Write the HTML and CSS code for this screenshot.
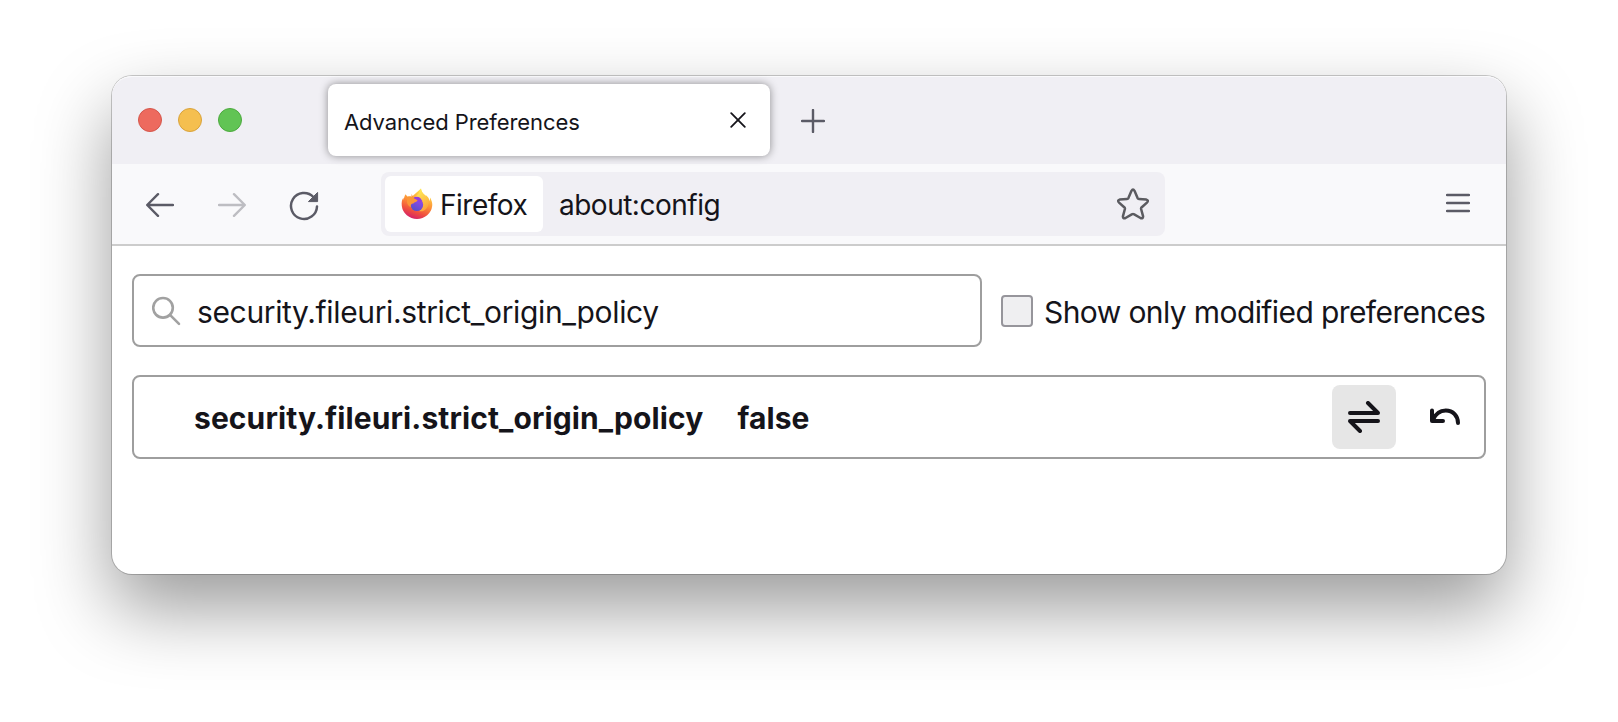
FILE: index.html
```html
<!DOCTYPE html>
<html lang="en">
<head>
<meta charset="utf-8">
<title>Advanced Preferences</title>
<link rel="stylesheet" href="styles.css">
</head>
<body>
<div class="window">
  <div class="tabbar">
    <div class="lights"><span class="light red"></span><span class="light yellow"></span><span class="light green"></span></div>
    <div class="tab">
      <span class="tab-title">Advanced Preferences</span>
      <svg class="close" width="16" height="16" viewBox="0 0 16 16"><path d="M1.2 1.2 14.8 14.8M14.8 1.2 1.2 14.8"/></svg>
    </div>
    <svg class="plus" width="24" height="24" viewBox="0 0 24 24"><path d="M12 1V23M1 12H23"/></svg>
  </div>
  <div class="nav">
    <svg class="back" width="28" height="24" viewBox="0 0 28 24"><path d="M27 12H1.5M12 1.2 1.2 12 12 22.8"/></svg>
    <svg class="forward" width="28" height="24" viewBox="0 0 28 24"><path d="M1 12H26.5M16 1.2 26.8 12 16 22.8"/></svg>
    <svg class="reload" width="30" height="30" viewBox="0 0 30 30"><path class="arc" d="M28 15.5A13 13 0 1 1 24.4 6"/><path class="tip" d="M28.6 1.8V10.6H19.8Z"/></svg>
    <div class="urlbar">
      <div class="identity">
        <svg class="logo" width="32" height="32" viewBox="0 0 32 32">
          <defs>
            <linearGradient id="flame" x1=".75" y1=".1" x2=".4" y2="1"><stop offset="0" stop-color="#ffe24a"/><stop offset=".45" stop-color="#fd9038"/><stop offset=".75" stop-color="#f0503f"/><stop offset="1" stop-color="#d62368"/></linearGradient>
            <linearGradient id="globe" x1=".8" y1="0" x2=".3" y2="1"><stop offset="0" stop-color="#9a48ee"/><stop offset="1" stop-color="#5450c8"/></linearGradient>
            <linearGradient id="wing" x1=".2" y1="0" x2=".6" y2="1"><stop offset="0" stop-color="#fff15a"/><stop offset="1" stop-color="#fda23c"/></linearGradient>
          </defs>
          <path fill="url(#flame)" d="M4.6 6.2C5 7.3 5.5 8 6.3 8.8 8 8.2 9.4 8.2 10.8 8.7L20 .5C20.5 4.5 22.5 5.8 25 8V7.2C27.5 9 28.2 11 28.6 13.2L29.2 9.5C30.8 13 31.6 15 31.2 18A15.3 14.6 0 0 1 .8 18C.4 14 1 11.5 2.4 9.7L2.6 12C3 9.8 3.5 8 4.6 6.2Z"/>
          <path fill="url(#wing)" d="M20 .5C20.5 4.5 22.5 5.8 25 8 28.5 11.5 28.5 16 26.2 19.5 24 23 20 24 18 23 22 21 23.2 16 20.5 12.5 18.5 10.2 15 10.5 14.5 8.6 16.6 7 18.7 4.5 20 .5Z"/>
          <circle cx="15.9" cy="16.8" r="6.3" fill="url(#globe)"/>
          <path fill="#943edd" d="M12 10.2C15.5 7.4 20.5 9 21.2 14.2L19.8 12.8 19.6 15Z"/>
          <path fill="#fb9638" d="M4.6 6.2C5.2 7.6 6 8.2 7 9 8.5 8.6 9.5 8.6 10.4 9.2L10.6 6 12.8 10.2 16.6 12.2C16.2 14 13.4 14 12.4 15.4 10.4 15.2 9.4 17 9.8 19.2 7 17.8 5.4 15.4 6 12Z"/>
        </svg>
        <span class="id-text">Firefox</span>
      </div>
      <span class="url">about:config</span>
      <svg class="star" width="32" height="32" viewBox="0 0 32 32"><path d="M14.5 2.8Q16 .2 17.5 2.8L20.6 10.1Q21 10.9 22 11L29.4 11.6Q31.8 12.3 30.2 14.3L24.5 19.5Q23.9 20.1 24.1 21L26.1 28.4Q26 31.1 23.5 30L16.8 26.2Q16 25.7 15.2 26.2L8.5 30Q6 31.1 5.9 28.4L7.9 21Q8.1 20.1 7.5 19.5L1.8 14.3Q.2 12.3 2.6 11.6L10 11Q11 10.9 11.4 10.1Z"/></svg>
    </div>
    <svg class="menu" width="24" height="20" viewBox="0 0 24 20"><path d="M1 2H23M1 10H23M1 18H23"/></svg>
  </div>
  <div class="content">
    <div class="search-row">
      <div class="search">
        <svg class="lens" width="30" height="30" viewBox="0 0 30 30"><circle cx="11" cy="11.8" r="9.8"/><path d="M18 18.8 27 27.8"/></svg>
        <span class="query">security.fileuri.strict_origin_policy</span>
      </div>
      <span class="checkbox"></span>
      <span class="label">Show only modified preferences</span>
    </div>
    <div class="pref">
      <span class="pref-name">security.fileuri.strict_origin_policy</span>
      <span class="pref-value">false</span>
      <span class="toggle"><svg width="32" height="32" viewBox="0 0 32 32"><path d="M2 12H30L20 2M30 20H2L12 30"/></svg></span>
      <svg class="undo" width="32" height="20" viewBox="0 0 32 20"><path d="M3 3.4V14H14M3.4 13.6C6.5 6.5 11.5 3.6 16.8 3.6 24 3.6 29 9 29 16"/></svg>
    </div>
  </div>
</div>
</body>
</html>
```
FILE: styles.css
```css
* { box-sizing: border-box; }
body { margin: 0; height: 722px; overflow: hidden; background: #fff; padding: 76px 112px; font-family: Inter, "Liberation Sans", sans-serif; color: #15141a; white-space: nowrap; }
svg { display: block; flex: none; fill: none; stroke-linecap: round; stroke-linejoin: round; }
.window { width: 1394px; height: 498px; border-radius: 20px; background: #fff; box-shadow: 0 0 0 1px rgba(0,0,0,.2), 0 34px 74px rgba(0,0,0,.4); }
.tabbar { height: 88px; display: flex; align-items: flex-start; background: #f0eff4; border-radius: 20px 20px 0 0; box-shadow: inset 0 2px 0 -1px #fafafc; padding: 8px 0 0 26px; }
.lights { display: flex; gap: 16px; margin-top: 24px; width: 190px; }
.light { width: 24px; height: 24px; border-radius: 50%; border: 1px solid; }
.red { background: #ed6a5e; border-color: #d5564b; }
.yellow { background: #f5bf4f; border-color: #d9a33c; }
.green { background: #61c454; border-color: #4caa3e; }
.tab { width: 442px; height: 72px; display: flex; align-items: center; background: #fff; border-radius: 8px; padding: 0 24px 0 16px; box-shadow: 0 0 8px rgba(0,0,0,.42); }
.tab-title { font-size: 22px; letter-spacing: -.08px; padding-top: 4px; }
.close { margin-left: auto; stroke: #15141a; stroke-width: 1.8; }
.plus { margin: 25px 0 0 31px; stroke: #5b5b66; stroke-width: 2.4; }
.nav { height: 82px; display: flex; align-items: center; background: #f9f9fb; border-bottom: 2px solid #ccc; padding: 0 36px 0 34px; }
.back { stroke: #5b5b66; stroke-width: 2.4; margin-top: 2px; }
.forward { stroke: #bdbdc2; stroke-width: 2.4; margin: 2px 0 0 44px; }
.reload { margin: 3px 0 0 43px; }
.arc { stroke: #5b5b66; stroke-width: 2.5; }
.tip { fill: #5b5b66; stroke: #5b5b66; stroke-width: 1; }
.urlbar { width: 784px; height: 64px; margin-left: 62px; display: flex; align-items: center; background: #f0eff4; border-radius: 8px; padding: 4px 16px 4px 4px; font-size: 28px; letter-spacing: -.5px; }
.identity { width: 158px; height: 56px; display: flex; align-items: center; background: #fff; border-radius: 6px; padding-left: 16px; }
.id-text { margin-left: 7px; padding-top: 2px; }
.url { margin-left: 16px; padding-top: 2px; }
.star { margin-left: auto; stroke: #5b5b60; stroke-width: 2.5; }
.menu { margin: 0 0 2px auto; stroke: #5b5b66; stroke-width: 2.3; }
.content { padding: 28px 20px 0; }
.search-row { height: 73px; display: flex; align-items: center; }
.search { flex: none; width: 850px; height: 73px; display: flex; align-items: center; border: 2px solid #9e9e9e; border-radius: 8px; padding-left: 18px; }
.lens { stroke: #a1a1a1; stroke-width: 2.6; }
.query, .label { font-size: 30px; padding-top: 2px; }
.query { margin-left: 15px; letter-spacing: -.36px; }
.checkbox { flex: none; width: 32px; height: 32px; margin-left: 19px; background: #efeff1; border: 2px solid #96959b; border-radius: 4px; }
.label { margin-left: 11px; letter-spacing: -.6px; }
.pref { height: 84px; margin-top: 28px; display: flex; align-items: center; border: 2px solid #9e9e9e; border-radius: 8px; padding: 0 23px 0 60px; font-size: 30px; font-weight: 700; letter-spacing: .1px; }
.pref-name, .pref-value { padding-top: 2px; }
.pref-value { margin-left: 34px; }
.toggle { width: 64px; height: 64px; display: grid; place-items: center; margin-left: auto; background: #e6e6e6; border-radius: 8px; }
.toggle svg, .undo { stroke: #15141a; stroke-width: 4; }
.undo { margin-left: 33px; }
```
